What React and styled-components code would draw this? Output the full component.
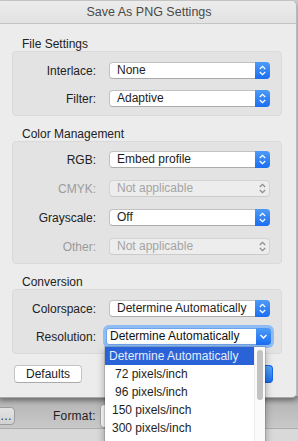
import styled, { createGlobalStyle } from 'styled-components';

const GlobalStyle = createGlobalStyle`
  html, body { margin: 0; padding: 0; }
  body {
    font-family: "Liberation Sans", Arial, sans-serif;
    font-size: 12px;
    color: #222;
    background: #cfcfcf;
  }
`;

const Page = styled.div`
  position: relative;
  width: 298px;
  height: 441px;
  overflow: hidden;
  background: #cfcfcf;
  display: flex;
  flex-direction: column;
`;

const Sheet = styled.div`
  width: 296px;
  height: 396px;
  margin-top: 1px;
  background: #ececec;
  border-right: 1px solid #b9b9b9;
  border-bottom: 1px solid #a9a9a9;
  border-radius: 0 5px 5px 0;
  box-shadow: 0 2px 5px rgba(0, 0, 0, 0.35);
  display: flex;
  flex-direction: column;
  position: relative;
  z-index: 1;
`;

const TitleBar = styled.div`
  height: 22px;
  flex: none;
  display: flex;
  align-items: center;
  justify-content: center;
  background: linear-gradient(#ececec, #e2e2e2);
  border-bottom: 1px solid #c4c4c4;
  border-radius: 0 5px 0 0;
  font-size: 12.5px;
  color: #4a4a4a;
  padding-left: 2px;
`;

const Body = styled.div`
  padding: 13px 14px 0 12px;
  display: flex;
  flex-direction: column;
`;

const SectionTitle = styled.div`
  padding-left: 10px;
  height: 14px;
  line-height: 14px;
  margin-top: ${(p) => p.$top || 0}px;
`;

const Group = styled.div`
  background: #e3e3e3;
  border: 1px solid #dadada;
  border-radius: 4px;
  padding: ${(p) => p.$pad || '10px 12px 8px 0'};
  display: grid;
  grid-template-columns: 83px 161px;
  column-gap: 13px;
  row-gap: ${(p) => p.$gap || 11}px;
  align-items: center;
`;

const Label = styled.div`
  text-align: right;
  color: ${(p) => (p.$disabled ? '#9b9b9b' : '#222')};
  white-space: nowrap;
`;

const Select = styled.div`
  position: relative;
  height: 15px;
  border: 1px solid ${(p) => (p.$disabled ? '#d3d3d3' : '#c2c2c2')};
  border-bottom-color: ${(p) => (p.$disabled ? '#cbcbcb' : '#ababab')};
  border-radius: 4px;
  background: ${(p) => (p.$disabled ? '#ededed' : '#fff')};
  color: ${(p) => (p.$disabled ? '#a4a4a4' : '#1e1e1e')};
  display: flex;
  align-items: center;
  padding-left: 7px;
  line-height: 15px;
  white-space: nowrap;
`;

const Stepper = styled.div`
  position: absolute;
  top: -1px;
  right: -1px;
  bottom: -1px;
  width: 15px;
  border-radius: 0 4px 4px 0;
  background: ${(p) =>
    p.$disabled ? 'transparent' : 'linear-gradient(#4d9bf8, #1a6ef1)'};
  display: flex;
  align-items: center;
  justify-content: center;
  svg { display: block; }
`;

const ComboRing = styled.div`
  margin: -3px -4px -3px -6px;
  padding: 3px;
  border-radius: 6px;
  background: #8fbcf5;
`;

const Combo = styled.div`
  position: relative;
  height: 15px;
  background: #fff;
  border: 1px solid #6fa3ec;
  border-radius: 3px;
  padding-left: 3px;
  line-height: 15px;
  color: #111;
  white-space: nowrap;
`;

const ButtonRow = styled.div`
  display: flex;
  align-items: center;
  margin: 11px 9px 0 2px;
`;

const Button = styled.div`
  height: 16px;
  line-height: 16px;
  padding: 0 ${(p) => p.$px || 10}px;
  border-radius: 4px;
  border: 1px solid ${(p) => (p.$primary ? '#1b66e0' : '#c3c3c3')};
  border-bottom-color: ${(p) => (p.$primary ? '#1257c8' : '#aaa')};
  background: ${(p) => (p.$primary ? 'linear-gradient(#5aa5f9, #1a70f2)' : '#fff')};
  color: ${(p) => (p.$primary ? '#fff' : '#222')};
  text-align: center;
  margin-left: ${(p) => (p.$push ? 'auto' : '0')};
`;

const Window = styled.div`
  flex: 1;
  display: flex;
  flex-direction: column;
  margin-top: -2px;
`;

const Toolbar = styled.div`
  height: 33px;
  background: linear-gradient(#999, #b9b9b9 30%, #c9c9c9);
  border-bottom: 1px solid #adadad;
  display: flex;
  align-items: center;
  padding-top: 8px;
  box-sizing: border-box;
`;

const MoreButton = styled.div`
  width: 30px;
  height: 18px;
  margin-left: -15px;
  border: 1px solid #9c9c9c;
  border-radius: 4px;
  background: linear-gradient(#e4e4e4, #d2d2d2);
  line-height: 16px;
  text-align: right;
  padding-right: 2px;
  box-sizing: border-box;
  color: #333;
`;

const FormatLabel = styled.div`
  margin-left: 38px;
  color: #1e1e1e;
  letter-spacing: 0.2px;
`;

const FormatPopup = styled.div`
  margin-left: 4px;
  width: 150px;
  height: 22px;
  background: #fff;
  border: 1px solid #a8a8a8;
  border-radius: 4px;
`;

const Floor = styled.div`
  flex: 1;
  background: #d9d9d9;
`;

const Menu = styled.div`
  position: absolute;
  left: 105px;
  top: 347px;
  width: 160px;
  height: 100px;
  background: #fff;
  box-shadow: 0 3px 8px rgba(0, 0, 0, 0.35), 0 0 0 1px rgba(0, 0, 0, 0.12);
  z-index: 5;
  display: flex;
`;

const MenuList = styled.div`
  flex: 1;
  display: flex;
  flex-direction: column;
`;

const MenuItem = styled.div`
  height: 18px;
  line-height: 18px;
  padding-left: ${(p) => (p.$indent ? 10 : 7)}px;
  background: ${(p) => (p.$active ? '#2a63d8' : 'transparent')};
  color: ${(p) => (p.$active ? '#e6edfb' : '#1e1e1e')};
  white-space: nowrap;
  &:first-child { padding-left: 4px; }
`;

const ScrollTrack = styled.div`
  width: 11px;
  border-left: 1px solid #ececec;
  background: #fafafa;
  padding: 3px 2px 0 2px;
  box-sizing: border-box;
`;

const ScrollThumb = styled.div`
  height: 50px;
  border-radius: 3px;
  background: #c2c2c2;
`;

const UpDown = ({ color }) => (
  <svg width="9" height="13" viewBox="0 0 9 13">
    <path d="M1.8 5 L4.5 2.4 L7.2 5" fill="none" stroke={color} strokeWidth="1.3" />
    <path d="M1.8 8 L4.5 10.6 L7.2 8" fill="none" stroke={color} strokeWidth="1.3" />
  </svg>
);

const Down = () => (
  <svg width="9" height="9" viewBox="0 0 9 9">
    <path d="M1.5 3 L4.5 6 L7.5 3" fill="none" stroke="#fff" strokeWidth="1.4" />
  </svg>
);

const Popup = ({ value, disabled }) => (
  <Select $disabled={disabled}>
    {value}
    <Stepper $disabled={disabled}>
      <UpDown color={disabled ? '#8e8e8e' : '#fff'} />
    </Stepper>
  </Select>
);

const resolutions = [
  { label: 'Determine Automatically', active: true },
  { label: '72 pixels/inch', indent: true },
  { label: '96 pixels/inch', indent: true },
  { label: '150 pixels/inch' },
  { label: '300 pixels/inch' },
];

export default function App() {
  return (
    <>
      <GlobalStyle />
      <Page>
        <Sheet>
          <TitleBar>Save As PNG Settings</TitleBar>
          <Body>
            <SectionTitle>File Settings</SectionTitle>
            <Group>
              <Label>Interlace:</Label>
              <Popup value="None" />
              <Label>Filter:</Label>
              <Popup value="Adaptive" />
            </Group>

            <SectionTitle $top={11}>Color Management</SectionTitle>
            <Group $gap={12} $pad="9px 12px 8px 0">
              <Label>RGB:</Label>
              <Popup value="Embed profile" />
              <Label $disabled>CMYK:</Label>
              <Popup value="Not applicable" disabled />
              <Label>Grayscale:</Label>
              <Popup value="Off" />
              <Label $disabled>Other:</Label>
              <Popup value="Not applicable" disabled />
            </Group>

            <SectionTitle $top={11}>Conversion</SectionTitle>
            <Group>
              <Label>Colorspace:</Label>
              <Popup value="Determine Automatically" />
              <Label>Resolution:</Label>
              <ComboRing>
                <Combo>
                  Determine Automatically
                  <Stepper>
                    <Down />
                  </Stepper>
                </Combo>
              </ComboRing>
            </Group>

            <ButtonRow>
              <Button $px={11}>Defaults</Button>
              <Button $primary $push $px={24}>OK</Button>
            </ButtonRow>
          </Body>
        </Sheet>

        <Window>
          <Toolbar>
            <MoreButton>…</MoreButton>
            <FormatLabel>Format:</FormatLabel>
            <FormatPopup />
          </Toolbar>
          <Floor />
        </Window>

        <Menu>
          <MenuList>
            {resolutions.map((r) => (
              <MenuItem key={r.label} $active={r.active} $indent={r.indent}>
                {r.label}
              </MenuItem>
            ))}
          </MenuList>
          <ScrollTrack>
            <ScrollThumb />
          </ScrollTrack>
        </Menu>
      </Page>
    </>
  );
}
